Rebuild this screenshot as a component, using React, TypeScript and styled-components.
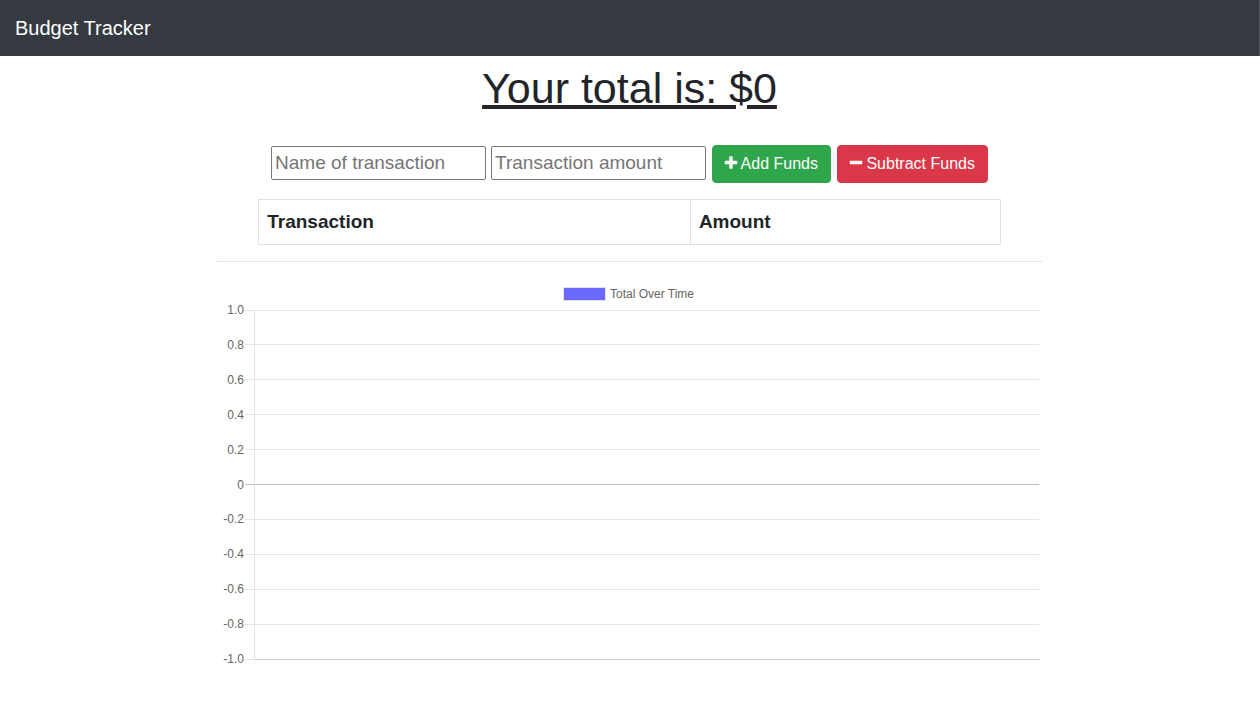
import React from "react";
import styled, { createGlobalStyle } from "styled-components";

const GlobalStyle = createGlobalStyle`
  *, *::before, *::after { box-sizing: border-box; }
  body {
    margin: 0;
    background: #fff;
    color: #212529;
    font-family: "Liberation Sans", Arial, sans-serif;
    font-size: 16px;
    line-height: 1.5;
  }
`;

const Navbar = styled.nav`
  display: flex;
  align-items: center;
  padding: 13px 15px;
  background: #343a40;
  border-right: 1px solid #53585d;
`;

const Brand = styled.a`
  color: #fff;
  font-size: 20px;
  line-height: 30px;
  text-decoration: none;
`;

const Page = styled.main`
  padding-right: 1px;
`;

const Wrapper = styled.div`
  max-width: 825px;
  margin: 0 auto;
`;

const Total = styled.div`
  margin-bottom: 25px;
  font-size: 43px;
  line-height: 64px;
  text-align: center;
  text-decoration: underline;
  text-decoration-thickness: 4px;
  text-underline-offset: 2px;
`;

const Form = styled.form`
  display: flex;
  flex-wrap: wrap;
  align-items: center;
  justify-content: center;
  gap: 6px;
  margin-bottom: 16px;
`;

const Fields = styled.div`
  display: flex;
  flex-wrap: wrap;
  gap: 5px;
`;

const TextField = styled.input`
  width: 215px;
  height: 34px;
  margin: 0 0 2px;
  padding: 1px 3px;
  border: 1px solid #767676;
  border-radius: 2px;
  background: #fff;
  color: #212529;
  font-family: inherit;
  font-size: 19px;

  &::placeholder { color: #757575; opacity: 1; }
`;

const ActionButton = styled.button<{ $color: string }>`
  margin: 0;
  padding: 6px 12px;
  border: 1px solid ${(p) => p.$color};
  border-radius: 4px;
  background: ${(p) => p.$color};
  color: #fff;
  font-family: inherit;
  font-size: 16px;
  line-height: 24px;
  white-space: nowrap;
  cursor: pointer;
`;

const Icon = styled.svg`
  width: 12px;
  height: 16px;
  vertical-align: -2px;
  fill: currentColor;
`;

const Table = styled.table`
  width: 90%;
  margin: 0 auto 16px;
  border-collapse: collapse;
  font-size: 19px;
  line-height: 28px;
`;

const HeaderCell = styled.th`
  padding: 8px;
  border: 1px solid #dee2e6;
  text-align: left;
`;

const Divider = styled.hr`
  margin: 0 0 16px;
  border: 0;
  border-top: 1px solid #e5e5e5;
`;

const Chart = styled.svg`
  display: block;
  width: 100%;
  height: auto;
  font-size: 12px;
  fill: #666;
`;

const PLUS =
  "M1600 736v192q0 40-28 68t-68 28h-416v416q0 40-28 68t-68 28h-192q-40 0-68-28t-28-68v-416h-416q-40 0-68-28t-28-68v-192q0-40 28-68t68-28h416v-416q0-40 28-68t68-28h192q40 0 68 28t28 68v416h416q40 0 68 28t28 68z";
const MINUS =
  "M1600 736v192q0 40-28 68t-68 28h-1216q-40 0-68-28t-28-68v-192q0-40 28-68t68-28h1216q40 0 68 28t28 68z";

const TICKS = ["1.0", "0.8", "0.6", "0.4", "0.2", "0", "-0.2", "-0.4", "-0.6", "-0.8", "-1.0"];
const PLOT = { top: 32, bottom: 381, left: 37, right: 822 };

const tickY = (i: number) => PLOT.top + (i * (PLOT.bottom - PLOT.top)) / (TICKS.length - 1);

function TotalChart() {
  return (
    <Chart viewBox="0 0 825 412" role="img" aria-label="Total Over Time">
      <rect x="346" y="9" width="43" height="14" fill="#e2e2e6" />
      <rect x="347" y="10" width="41" height="12" fill="#6969fd" />
      <text x="393" y="20">Total Over Time</text>
      {TICKS.map((label, i) => (
        <g key={label}>
          <rect
            x={PLOT.left - 9}
            y={Math.floor(tickY(i))}
            width={PLOT.right - PLOT.left + 9}
            height="1"
            fill={label === "0" ? "#bfbfbf" : "#e5e5e5"}
          />
          <text x="27" y={Math.round(tickY(i)) + 4} textAnchor="end">{label}</text>
        </g>
      ))}
      <rect x={PLOT.left} y={PLOT.top} width="1" height={PLOT.bottom - PLOT.top} fill="#e5e5e5" />
      <rect x={PLOT.left} y={PLOT.bottom} width={PLOT.right - PLOT.left + 1} height="1" fill="#cecece" />
    </Chart>
  );
}

export default function App() {
  return (
    <>
      <GlobalStyle />
      <Navbar>
        <Brand href="/">Budget Tracker</Brand>
      </Navbar>
      <Page>
        <Wrapper>
          <Total>Your total is: $0</Total>
          <Form onSubmit={(e) => e.preventDefault()}>
            <Fields>
              <TextField type="text" aria-label="Name of transaction" placeholder="Name of transaction" />
              <TextField type="number" aria-label="Transaction amount" placeholder="Transaction amount" />
            </Fields>
            <ActionButton type="button" $color="#2fa64b">
              <Icon viewBox="224 0 1344 1792" overflow="visible" aria-hidden="true"><path d={PLUS} /></Icon>
              {" Add Funds"}
            </ActionButton>
            <ActionButton type="button" $color="#da3849">
              <Icon viewBox="224 0 1344 1792" overflow="visible" aria-hidden="true"><path d={MINUS} /></Icon>
              {" Subtract Funds"}
            </ActionButton>
          </Form>
          <Table>
            <thead>
              <tr>
                <HeaderCell scope="col">Transaction</HeaderCell>
                <HeaderCell scope="col">Amount</HeaderCell>
              </tr>
            </thead>
            <tbody />
          </Table>
          <Divider />
          <TotalChart />
        </Wrapper>
      </Page>
    </>
  );
}
